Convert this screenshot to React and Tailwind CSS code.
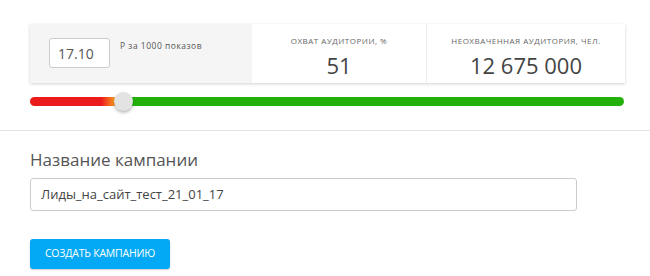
export default function App() {
  const stats = [
    { label: "Охват аудитории, %", value: "51", w: "w-[174px]" },
    { label: "Неохваченная аудитория, чел.", value: "12 675 000", w: "flex-1" },
  ];

  return (
    <div className="w-[650px] h-[276px] bg-white font-['Open_Sans',sans-serif] text-[#444] overflow-hidden">
      <div className="px-[30px] pt-[24px]">
        <div className="flex h-[59px] w-[595px] bg-white shadow-[0_1px_3px_rgba(0,0,0,0.18)]">
          <div className="w-[222px] bg-[#f5f5f5] flex items-start pl-[19px] pt-[14px] gap-[10px]">
            <div className="w-[61px] h-[30px] border border-[#ccc] rounded-[3px] bg-white flex items-center pl-[8px] text-[14px] text-[#555]">
              17.10
            </div>
            <div className="text-[8.5px] tracking-[0.5px] text-[#555] leading-none pt-[4px]">Р за 1000 показов</div>
          </div>
          {stats.map((s, i) => (
            <div key={s.label} className={s.w + " flex flex-col items-center pt-[13px] " + (i > 0 ? "border-l border-[#eee]" : "")}>
              <div className="text-[8px] uppercase text-[#666] leading-none tracking-[0.5px]">{s.label}</div>
              <div className="text-[22px] leading-none mt-[9px] text-[#444]">{s.value}</div>
            </div>
          ))}
        </div>

        <div className="relative mt-[14px] w-[594px] h-[9px] rounded-full bg-[linear-gradient(to_right,#ec1b1b_0%,#ec1b1b_12%,#f6a522_14.5%,#f2c230_15.5%,#24b00b_16%,#24b00b_100%)]">
          <div className="absolute left-[84px] top-[-5px] w-[19px] h-[19px] rounded-full bg-[#e3e3e3] shadow-[0_2px_3px_rgba(0,0,0,0.25)]" />
        </div>
      </div>

      <div className="mt-[24px] border-t border-[#e2e2e2]" />

      <div className="px-[30px] pt-[20px]">
        <div className="text-[17px] text-[#555] leading-none">Название кампании</div>
        <div className="mt-[10px] w-[547px] h-[33px] border border-[#ccc] rounded-[3px] flex items-center pl-[10px] text-[13px] text-[#444]">
          Лиды_на_сайт_тест_21_01_17
        </div>
        <button className="mt-[28px] w-[140px] h-[30px] bg-[#03a9f4] rounded-[3px] text-white text-[10.5px] uppercase tracking-[-0.2px] shadow-[0_1px_2px_rgba(0,0,0,0.2)]">
          Создать кампанию
        </button>
      </div>
    </div>
  );
}
